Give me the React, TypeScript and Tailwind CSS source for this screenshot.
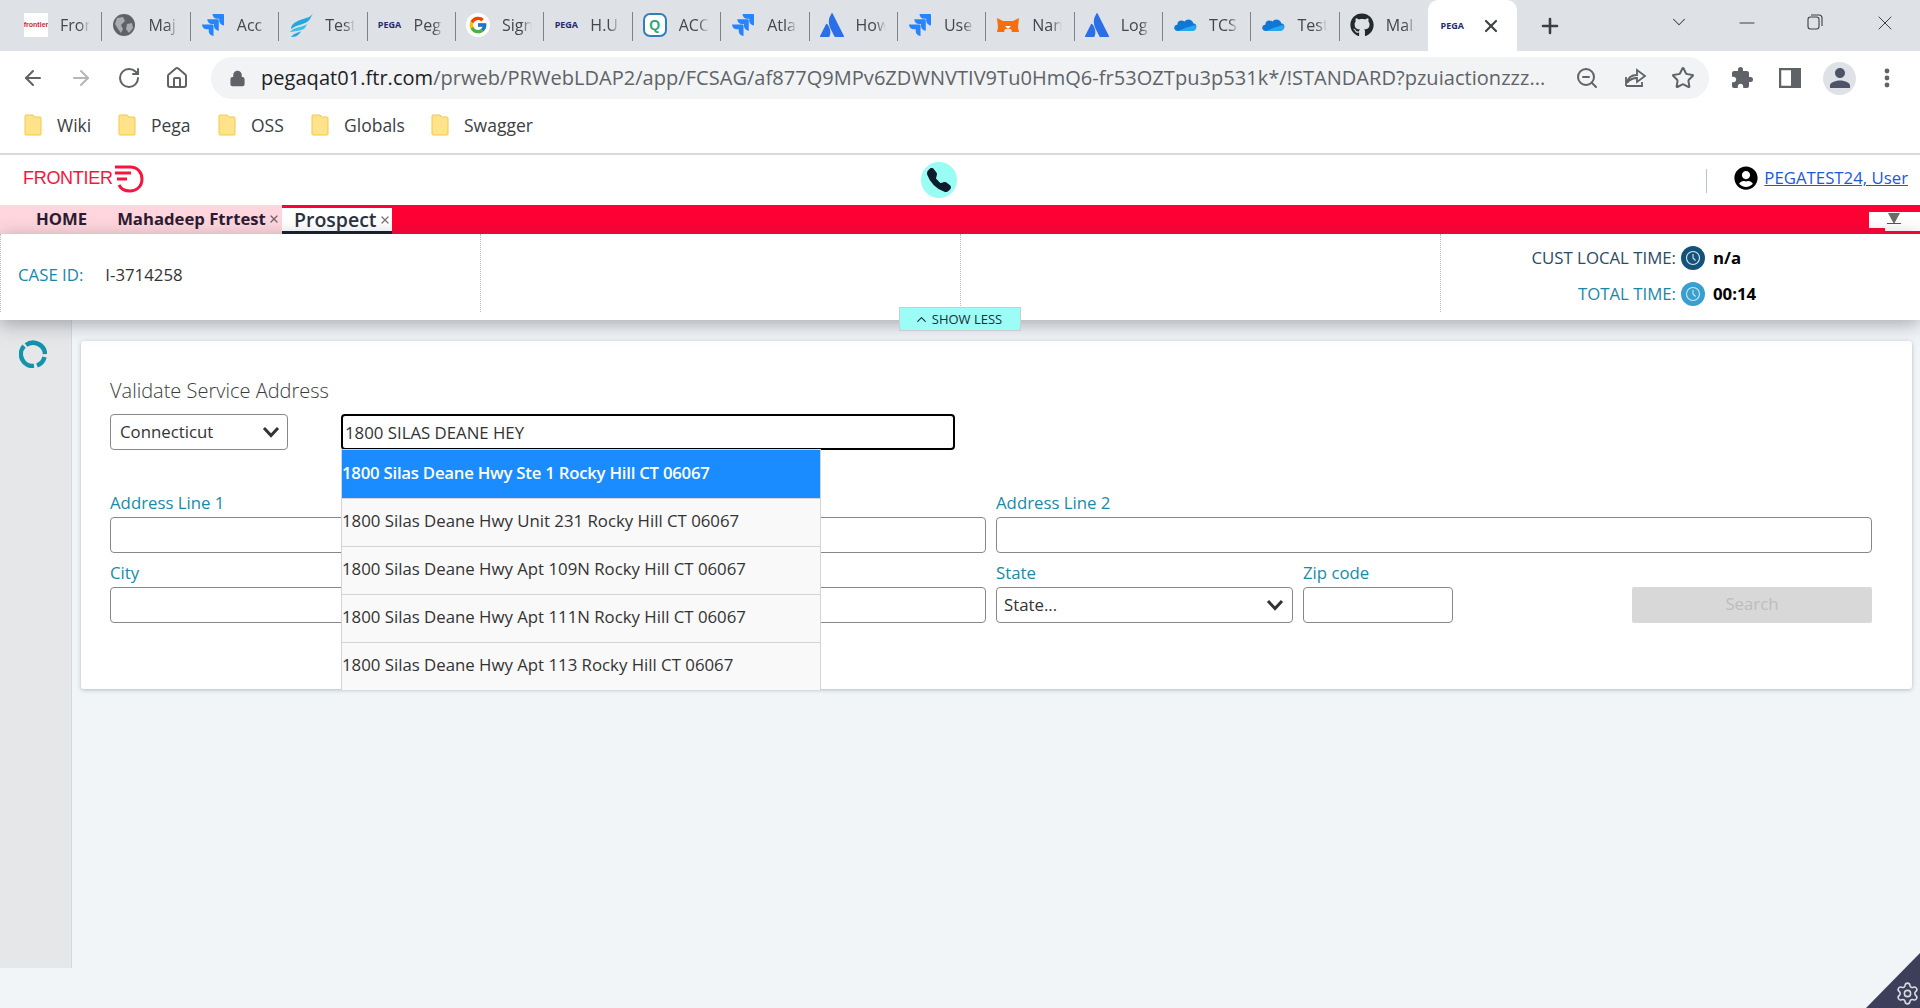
import React from "react";
import { ArrowLeft, ArrowRight, RotateCw, Home, Lock, ZoomOut, Star, Settings, X, Plus, ChevronDown, Minus, ChevronUp } from "lucide-react";
import { FcGoogle } from "react-icons/fc";
import { FaGithub, FaUserCircle } from "react-icons/fa";
import { SiJira, SiAtlassian } from "react-icons/si";
import { MdExtension, MdPerson } from "react-icons/md";
import { BsTelephoneFill } from "react-icons/bs";

const Pega = () => <span className="w-6 text-center text-[9px] font-bold text-[#252a6b] font-['Open_Sans',sans-serif]">PEGA</span>;
const Jira = () => <SiJira size={22} className="text-[#2684ff]" />;
const Atl = () => <SiAtlassian size={24} className="text-[#2a6fe8]" />;
const Cloud = () => (
  <svg width="24" height="24" viewBox="0 0 24 24"><path d="M9 17 L20 17 C24 17 25 11 20.500 10.500 C19 6 14 5 11.500 8.500 C8 6 4 8 4.500 11.500 C0 12 0 18 5 18 L10 18Z" fill="#0f78d4" /><path d="M5 18 L20 18 C23 18 24 14 22 12 L12 15Z" fill="#28a8ea" /></svg>
);
const Fav = ({ kind }: { kind: string }) => {
  if (kind === "frontier") return <span className="w-6 h-6 bg-white flex items-center justify-center text-[7px] font-bold text-[#d21c3c] overflow-hidden font-['Liberation_Sans',sans-serif]">frontier</span>;
  if (kind === "globe") return (
    <svg width="24" height="24" viewBox="0 0 24 24"><circle cx="12" cy="12" r="11" fill="#5f6368" /><path d="M5 5 L11 4 L13 8 L9 12 L11 16 L9 20 L6 16 L3 11Z M15 11 L20 10 L21 15 L17 20 L14 16Z" fill="#a9acb0" /></svg>
  );
  if (kind === "jira") return <Jira />;
  if (kind === "test") return (
    <svg width="24" height="24" viewBox="0 0 24 24"><path d="M24 0 C21 6 13 5 7 9 C3 11 2 14 2 16 C8 11 17 12 21 6Z" fill="#22a7e0" /><path d="M18 11 C13 15 6 13 1 19 C6 18 13 18 16 15Z" fill="#3dbde8" /><path d="M12 18 C9 20 5 20 2 24 C6 24 10 23 12 18Z" fill="#22a7e0" /></svg>
  );
  if (kind === "pega") return <Pega />;
  if (kind === "google") return <span className="w-6 h-6 rounded-full bg-white flex items-center justify-center"><FcGoogle size={20} /></span>;
  if (kind === "q") return (
    <span className="w-6 h-6 rounded-[7px] border-2 border-[#2f7fb8] bg-white flex items-center justify-center text-[14px] font-bold text-[#2aa87a] font-['Liberation_Sans',sans-serif]">Q</span>
  );
  if (kind === "atl") return <Atl />;
  if (kind === "fox") return (
    <svg width="24" height="24" viewBox="0 0 24 24"><path d="M1 5 L7 8 L17 8 L23 5 L22 14 L23 19 L16 19 L15 16 L9 16 L8 19 L1 19 L2 14Z" fill="#f56f0e" /><path d="M9 13 L15 13 L12 16Z" fill="#fff" /></svg>
  );
  if (kind === "cloud") return <Cloud />;
  if (kind === "github") return <FaGithub size={24} className="text-[#24292e]" />;
  return null;
};

const tabs = [
  ["frontier", "Fron"], ["globe", "Maj"], ["jira", "Acc"], ["test", "Test"], ["pega", "Peg"], ["google", "Sign"],
  ["pega", "H.U"], ["q", "ACC"], ["jira", "Atla"], ["atl", "How"], ["jira", "Use"], ["fox", "Nan"],
  ["atl", "Log"], ["cloud", "TCS"], ["cloud", "Test"], ["github", "Mal"],
];

const TabStrip = () => (
  <div className="h-[51px] bg-[#dee1e6] flex pl-[14px] items-start shrink-0">
    {tabs.map(([k, t], i) => (
      <div key={i} className="w-[88.4px] h-[51px] shrink-0 flex items-center pl-[10px] pb-[1px] relative">
        <span className="w-6 h-6 shrink-0 flex items-center justify-center"><Fav kind={k} /></span>
        <span className="ml-[12px] w-[30px] overflow-hidden whitespace-nowrap text-[16px] text-[#45474a] [mask-image:linear-gradient(to_right,black_65%,transparent)]">{t}</span>
        {i < 15 && <span className="absolute right-0 top-[12px] h-[29px] w-[1px] bg-[#7f8388]" />}
      </div>
    ))}
    <div className="w-[89px] h-[51px] shrink-0 bg-white rounded-t-[10px] flex items-center pl-[12px] gap-[17px]">
      <Pega />
      <X size={20} strokeWidth={2.6} className="text-[#3c4043]" />
    </div>
    <div className="w-[66px] h-[51px] flex items-center justify-center pl-0">
      <Plus size={24} strokeWidth={2.6} className="text-[#3c4043]" />
    </div>
    <div className="flex-1 flex items-start text-[#3c4043] pt-[11px] pl-[85px]">
      <ChevronDown size={22} strokeWidth={1.1} />
      <div className="w-[69px] ml-[46px] flex justify-start"><Minus size={24} strokeWidth={1} className="-ml-[1px]" /></div>
      <svg width="18" height="20" viewBox="0 0 18 20" fill="none" stroke="#3c4043" strokeWidth="1.100" className="mt-[1px] ml-[1px]"><rect x="2" y="5" width="11" height="12" rx="2.500" /><path d="M5 3 H13 Q16 3 16 6 V14" /></svg>
      <X size={24} strokeWidth={1} className="ml-[49px]" />
    </div>
  </div>
);

const Toolbar = () => (
  <div className="h-[54px] shrink-0 bg-white flex items-center pl-[21px] pt-0">
    <div className="flex w-[190px] shrink-0 items-center gap-[24px] text-[#5f6368] -mt-[0px]">
      <ArrowLeft size={24} strokeWidth={2} />
      <ArrowRight size={24} strokeWidth={2} className="text-[#b4b6b9]" />
      <RotateCw size={24} strokeWidth={2} />
      <Home size={24} strokeWidth={2} />
    </div>
    <div className="w-[1499px] h-[42px] bg-[#f1f3f4] rounded-full flex items-center pl-[18px] relative">
      <Lock size={17} fill="#5f6368" className="text-[#5f6368] shrink-0" />
      <span className="ml-[15px] text-[20px] whitespace-nowrap text-[#5f6368] tracking-[0.04px]"><span className="text-[#202124]">pegaqat01.ftr.com</span>/prweb/PRWebLDAP2/app/FCSAG/af877Q9MPv6ZDWNVTIV9Tu0HmQ6-fr53OZTpu3p531k*/!STANDARD?pzuiactionzzz...</span>
      <div className="absolute right-[14px] top-[9px] flex gap-[24px] text-[#5f6368]">
        <ZoomOut size={24} strokeWidth={2} />
        <svg width="24" height="24" viewBox="0 0 24 24" fill="none" stroke="#5f6368" strokeWidth="1.800"><path d="M3 20 H19 V16 M3 20 V11 M4 17 C5 11 9 9 14 9 V4 L22 10 L14 16 V12 C10 12 7 13 4 17Z" /></svg>
        <Star size={24} strokeWidth={2} />
      </div>
    </div>
    <div className="flex items-center text-[#5f6368] ml-[21px] w-[190px]">
      <MdExtension size={24} />
      <svg width="22" height="20" viewBox="0 0 22 20" className="ml-[25px]"><rect x="1" y="1" width="20" height="18" fill="none" stroke="#5f6368" strokeWidth="2.500" /><rect x="12" y="1" width="9" height="18" fill="#5f6368" /></svg>
      <span className="ml-[22px] w-[33px] h-[33px] rounded-full bg-[#dee1e6] flex items-center justify-center"><MdPerson size={30} className="text-[#4d5468]" /></span>
      <svg width="8" height="22" viewBox="0 0 8 22" className="ml-[27px]"><circle cx="4" cy="4" r="2.400" fill="#5f6368" /><circle cx="4" cy="11" r="2.400" fill="#5f6368" /><circle cx="4" cy="18" r="2.400" fill="#5f6368" /></svg>
    </div>
  </div>
);

const bookmarks = [["Wiki", "w-[94px]"], ["Pega", "w-[100px]"], ["OSS", "w-[93px]"], ["Globals", "w-[120px]"], ["Swagger", "w-[120px]"]];
const Bookmarks = () => (
  <div className="h-[48px] shrink-0 bg-white flex items-center pl-[24px] pb-[8px] border-0">
    {bookmarks.map(([t, w]) => (
      <div key={t} className={`${w} flex items-center shrink-0`}>
        <svg width="18" height="22" viewBox="0 0 18 22" className="shrink-0"><path d="M1 2 Q1 1 2 1 H9 L11 3 H16 Q17 3 17 4 V20 Q17 21 16 21 H2 Q1 21 1 20Z" fill="#ffe38b" stroke="#f3c84a" strokeWidth="1" /></svg>
        <span className="ml-[15px] text-[17.500px] text-[#3c4043]">{t}</span>
      </div>
    ))}
  </div>
);

const Logo = () => (
  <div className="flex items-center ml-[23px] w-[121px] h-[30px] relative">
    <span className="text-[18px] leading-none tracking-[-0.3px] text-[#f5163f] font-['Liberation_Sans',sans-serif] -mt-[5px]">FRONTIER</span>
    <svg width="30" height="30" viewBox="0 0 30 30" fill="none" className="absolute left-[91px] -top-[1px]">
      <path d="M1 3 H16 C24 3 28 9 28 15 C28 23 22 27 16 27 C11 27 7 25 5 21" stroke="#f5163f" strokeWidth="3" />
      <path d="M1 9 H17 M3 15 H13" stroke="#f5163f" strokeWidth="3" />
    </svg>
  </div>
);

const AppHeader = () => (
  <div className="h-[52px] shrink-0 bg-white flex items-center border-t-[2px] border-[#d9d9d9] relative">
    <Logo />
    <div className="absolute left-[921px] top-[7px] w-9 h-9 rounded-full bg-[#99fdf3] flex items-center justify-center">
      <BsTelephoneFill size={24} className="text-[#0f1c2e]" />
    </div>
    <div className="ml-auto flex items-center mr-[12px] -mt-[4px]">
      <span className="w-[1px] h-6 bg-[#b7c7bf] mr-[27px] mt-[6px]" />
      <FaUserCircle size={24} className="text-black mr-[6px]" />
      <a className="text-[16.800px] text-[#1b58e0] underline" href="#">PEGATEST24, User</a>
    </div>
  </div>
);

const Nav = () => (
  <div className="h-[29px] shrink-0 bg-[#ff0033] flex relative">
    <div className="w-[282px] bg-[#ffd6dd] flex items-center text-[16.700px] font-bold text-[#2c1b33] pb-[1px]">
      <span className="ml-[36px]">HOME</span>
      <span className="ml-[30px] whitespace-nowrap">Mahadeep Ftrtest</span>
      <X size={12} strokeWidth={2.500} className="ml-[2px] text-[#6e6470]" />
    </div>
    <div className="w-[110px] mt-[3px] bg-white border-b-[3px] border-[#141a2a] flex items-center text-[19.500px] font-semibold text-[#2c3242] pl-[12px] leading-none">
      Prospect
      <X size={12} strokeWidth={2.500} className="ml-[2px] text-[#777]" />
    </div>
    <div className="ml-auto mt-[7px] w-[51px] h-[16px] bg-white flex justify-center relative">
      <div className="absolute right-0 top-[16px] w-[35px] h-[3px] bg-white" />
      <div className="mt-[1px] ml-[-2px] flex flex-col items-center">
        <span className="w-0 h-0 border-l-[6px] border-r-[6px] border-t-[11px] border-l-transparent border-r-transparent border-t-[#6b6b6b]" />
        <span className="w-[14px] h-[1px] bg-[#1b58e0] -mt-[1px]" />
      </div>
    </div>
  </div>
);

const ClockBadge = ({ dark }: { dark: boolean }) => (
  <span className={`w-6 h-6 rounded-full flex items-center justify-center shrink-0 ${dark ? "bg-[#14527a]" : "bg-[#37a0d0]"}`}>
    <svg width="16" height="16" viewBox="0 0 16 16" fill="none" stroke="#d5e8f2" strokeWidth="1.100"><circle cx="8" cy="8" r="6.500" /><path d="M8 4 V8 L10.500 10.500" /></svg>
  </span>
);

const InfoBar = () => (
  <div className="h-[86px] shrink-0 bg-white relative z-10 shadow-[0_4px_18px_rgba(70,75,85,0.45)]">
    <div className="h-[78px] flex">
      <div className="w-[481px] shrink-0 border-l border-r border-dotted border-[#bbb] flex items-center pl-[17px] pt-[4px] text-[16.800px]">
        <span className="text-[#1a86a8]">CASE ID:</span>
        <span className="ml-[22px] text-[#333]">I-3714258</span>
      </div>
      <div className="w-[480px] shrink-0 border-r border-dotted border-[#bbb]" />
      <div className="w-[480px] shrink-0 border-r border-dotted border-[#bbb]" />
      <div className="flex-1 flex flex-col items-start pl-[58px]">
        <div className="w-[260px] mt-[12px] h-6 flex items-center">
          <span className="w-[177px] text-right text-[16.800px] text-[#2a4a66] whitespace-nowrap">CUST LOCAL TIME:</span>
          <span className="ml-[5px]"><ClockBadge dark /></span>
          <span className="ml-[8px] text-[16.800px] font-bold text-black">n/a</span>
        </div>
        <div className="w-[260px] mt-[12px] h-6 flex items-center">
          <span className="w-[177px] text-right text-[16.800px] text-[#1a86a8] whitespace-nowrap">TOTAL TIME:</span>
          <span className="ml-[5px]"><ClockBadge dark={false} /></span>
          <span className="ml-[8px] text-[16.800px] font-bold text-black">00:14</span>
        </div>
      </div>
    </div>
    <div className="absolute left-[899px] top-[73px] w-[122px] h-[24px] pt-[1px] bg-[#9bfdf5] border border-[#c8cfcf] flex items-center justify-center text-[13px] text-[#1c2a3a] z-20">
      <ChevronUp size={15} strokeWidth={1.8} className="mr-[3px] -ml-[4px]" />SHOW LESS
    </div>
  </div>
);

const options = [
  "1800 Silas Deane Hwy Ste 1 Rocky Hill CT 06067",
  "1800 Silas Deane Hwy Unit 231 Rocky Hill CT 06067",
  "1800 Silas Deane Hwy Apt 109N Rocky Hill CT 06067",
  "1800 Silas Deane Hwy Apt 111N Rocky Hill CT 06067",
  "1800 Silas Deane Hwy Apt 113 Rocky Hill CT 06067",
];

const Chevron = () => (
  <svg width="18" height="12" viewBox="0 0 18 12" fill="none" stroke="#333" strokeWidth="3"><path d="M2 2 L9 9.500 L16 2" /></svg>
);
const labelCls = "text-[16.800px] leading-5 text-[#1a8aa5] block";
const boxCls = "block h-9 w-full border border-[#888] rounded-[4px] bg-white";

const Card = () => (
  <div className="ml-[10px] w-[1831px] h-[348px] bg-white rounded-[3px] shadow-[0_1px_4px_rgba(90,100,110,0.4)] pl-[29px] pr-[40px] pt-[38px]">
    <div className="text-[20px] leading-6 text-[#3b3b3b] font-light">Validate Service Address</div>
    <div className="flex mt-[11px] items-start">
      <div className="w-[178px] h-9 border border-[#888] rounded-[4px] flex items-center justify-between pl-[9px] pr-[7px] text-[16.800px] text-[#333]">
        Connecticut <Chevron />
      </div>
      <div className="ml-[53px] w-[614px] relative z-10">
        <input readOnly value="1800 SILAS DEANE HEY" className="h-9 w-full border-2 border-black rounded-[4px] pl-[2px] text-[16.800px] text-[#333] outline-none" />
        <div className="absolute left-0 top-[35px] w-[480px] bg-[#f9f9f9] border border-[#d4d4d4] border-b-0">
          {options.map((o, i) => (
            <div key={o} className={`h-[48px] flex items-center pb-[3px] text-[16.800px] whitespace-nowrap ${i === 0 ? "bg-[#1a8cff] text-white font-semibold tracking-[-0.25px]" : "text-[#333] border-t border-[#d4d4d4]"}`}>{o}</div>
          ))}
        </div>
      </div>
    </div>
    <div className="grid grid-cols-[876px_876px] gap-x-[10px] mt-[43px]">
      <label className="block">
        <span className={labelCls}>Address Line 1</span>
        <input readOnly className={`${boxCls} mt-1`} />
      </label>
      <label className="block">
        <span className={labelCls}>Address Line 2</span>
        <input readOnly className={`${boxCls} mt-1`} />
      </label>
    </div>
    <div className="grid grid-cols-[876px_876px] gap-x-[10px] mt-[10px]">
      <label className="block">
        <span className={labelCls}>City</span>
        <input readOnly className={`${boxCls} mt-1`} />
      </label>
      <div className="flex items-start">
        <div className="w-[297px]">
          <span className={labelCls}>State</span>
          <div className={`${boxCls} mt-1 flex items-center justify-between pl-[7px] pr-[8px] text-[16.800px] text-[#333]`}>State... <Chevron /></div>
        </div>
        <div className="w-[150px] ml-[10px]">
          <span className={labelCls}>Zip code</span>
          <input readOnly className={`${boxCls} mt-1`} />
        </div>
        <button className="ml-auto mt-[24px] w-[240px] h-9 bg-[#d8d8d8] rounded-[2px] text-[16.800px] text-[#bdbdbd] pb-[2px]">Search</button>
      </div>
    </div>
  </div>
);

const Spinner = () => (
  <svg width="28" height="28" viewBox="0 0 28 28" fill="none" stroke="#1394ac" strokeWidth="4.500">
    <path d="M7 5 A12 12 0 0 1 26 14" />
    <path d="M25.500 17 A12 12 0 0 1 18 25.500" />
    <path d="M15 26 A12 12 0 0 1 5 6" />
  </svg>
);

export default function App() {
  return (
    <div className="w-[1920px] h-[1008px] overflow-hidden flex flex-col relative bg-[#f1f5f8] font-['Open_Sans',sans-serif]">
      <TabStrip />
      <Toolbar />
      <Bookmarks />
      <AppHeader />
      <Nav />
      <InfoBar />
      <div className="flex flex-1 items-start">
        <div className="w-[72px] h-[648px] shrink-0 bg-[#e6e7e9] border-r border-[#d5d8db] flex justify-center pt-[20px] pr-[5px]">
          <Spinner />
        </div>
        <div className="flex-1 pt-[21px]">
          <div className="-ml-[1px]"><Card /></div>
        </div>
      </div>
      <div className="absolute right-0 bottom-0 w-[54px] h-[55px] bg-[#3d3f5a] [clip-path:polygon(100%_0,100%_100%,0_100%)]">
        <Settings size={25} strokeWidth={1.500} className="absolute right-0 bottom-[2px] text-[#d9dae2]" />
      </div>
    </div>
  );
}
